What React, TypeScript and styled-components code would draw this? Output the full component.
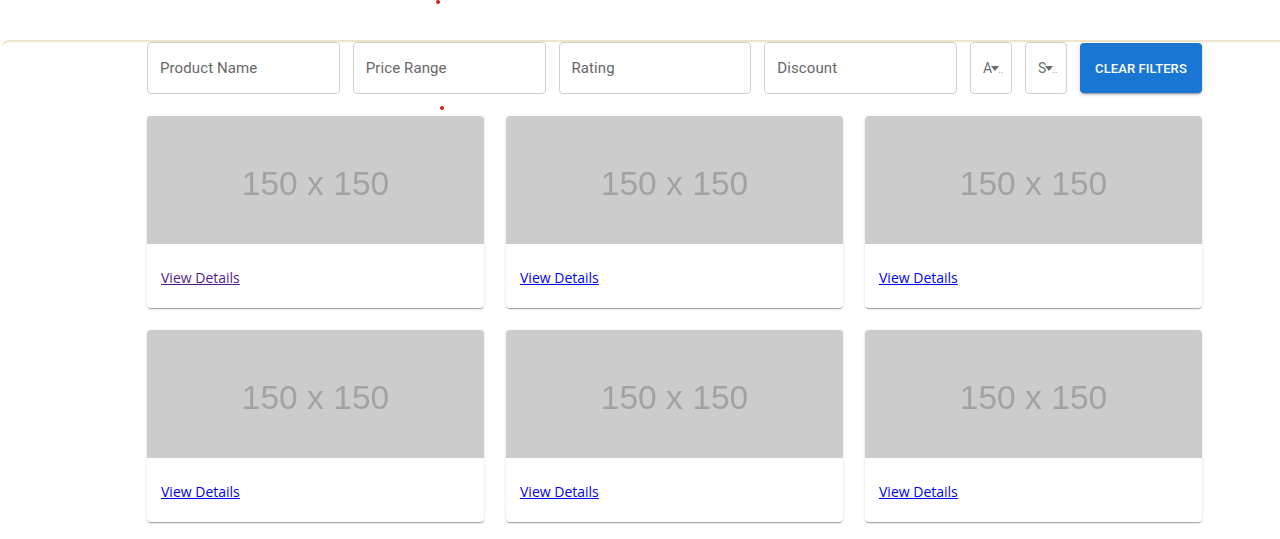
import React from "react";
import styled, { createGlobalStyle } from "styled-components";

const Global = createGlobalStyle`
  html, body { margin: 0; padding: 0; background: #fff; }
  body { font-family: Roboto, "Liberation Sans", sans-serif; }
`;

const Page = styled.div`
  position: relative;
  width: 1280px;
  height: 539px;
  overflow: hidden;
  background: #fff;
`;

const TopSpace = styled.div`
  height: 40px;
`;

const Panel = styled.div`
  border-top: 2px solid #efe3c9;
  border-left: 1px solid transparent;
  border-top-left-radius: 10px;
  padding-left: 146px;
  padding-right: 78px;
`;

const FilterRow = styled.div`
  display: flex;
  align-items: center;
  gap: 13px;
  height: 52px;
`;

const Field = styled.div<{ $w?: number }>`
  box-sizing: border-box;
  height: 52px;
  ${(p) => (p.$w ? `width: ${p.$w}px; flex: none;` : `flex: 1;`)}
  border: 1px solid #cfcfcf;
  border-radius: 4px;
  display: flex;
  align-items: center;
  padding-left: 12px;
  font-size: 15px;
  color: #676767;
  letter-spacing: 0.1px;
`;

const SelectText = styled.span`
  display: flex;
  align-items: center;
  font-size: 14px;
  color: #707070;
`;

const Dots = styled.span`
  font-size: 9px;
  margin-left: -1px;
  margin-top: 4px;
`;

const ClearButton = styled.button`
  box-sizing: border-box;
  flex: none;
  width: 122px;
  height: 50px;
  border: none;
  border-radius: 4px;
  background: #1976d2;
  color: #fff;
  font-family: Roboto, "Liberation Sans", sans-serif;
  font-weight: 500;
  font-size: 13px;
  letter-spacing: 0.1px;
  text-transform: uppercase;
  box-shadow: 0px 3px 1px -2px rgba(0,0,0,0.2), 0px 2px 2px 0px rgba(0,0,0,0.14), 0px 1px 5px 0px rgba(0,0,0,0.12);
`;

const Grid = styled.div`
  display: grid;
  grid-template-columns: repeat(3, 337px);
  column-gap: 22px;
  row-gap: 22px;
  margin-top: 22px;
`;

const Card = styled.div`
  height: 192px;
  border-radius: 4px;
  overflow: hidden;
  background: #fff;
  box-shadow: 0px 2px 1px -1px rgba(0,0,0,0.2), 0px 1px 1px 0px rgba(0,0,0,0.14), 0px 1px 3px 0px rgba(0,0,0,0.12);
  display: flex;
  flex-direction: column;
`;

const Placeholder = styled.div`
  box-sizing: border-box;
  height: 128px;
  padding-top: 7px;
  background: #cccccc;
  display: flex;
  align-items: center;
  justify-content: center;
  font-family: "Liberation Sans", Arial, sans-serif;
  font-size: 33.6px;
  color: #a2a2a2;
  filter: blur(0.4px);
`;

const CardBody = styled.div`
  flex: 1;
  display: flex;
  align-items: center;
  padding-left: 14px;
  padding-top: 3px;
`;

const DetailsLink = styled.a<{ $visited?: boolean }>`
  font-family: "Open Sans", "Noto Sans", sans-serif;
  font-size: 14px;
  color: ${(p) => (p.$visited ? "#551a8b" : "#0000ee")};
  text-decoration: underline;
`;

const RedDot = styled.span<{ $x: number; $y: number }>`
  position: absolute;
  left: ${(p) => p.$x}px;
  top: ${(p) => p.$y}px;
  width: 4px;
  height: 4px;
  border-radius: 50%;
  background: #d01c1c;
`;

const Arrow = () => (
  <svg width="8" height="6" viewBox="0 0 8 6" style={{ marginLeft: -1, marginTop: 2 }}>
    <path d="M0 0 H8 L4 5 Z" fill="#6a6a6a" />
  </svg>
);

const fields = ["Product Name", "Price Range", "Rating", "Discount"];

export default function App() {
  return (
    <Page>
      <Global />
      <TopSpace />
      <Panel>
        <FilterRow>
          {fields.map((f) => (
            <Field key={f}>{f}</Field>
          ))}
          <Field $w={42}>
            <SelectText>
              A<Arrow />
              <Dots>..</Dots>
            </SelectText>
          </Field>
          <Field $w={42}>
            <SelectText>
              S<Arrow />
              <Dots>..</Dots>
            </SelectText>
          </Field>
          <ClearButton>Clear Filters</ClearButton>
        </FilterRow>
        <Grid>
          {Array.from({ length: 6 }).map((_, i) => (
            <Card key={i}>
              <Placeholder>150 x 150</Placeholder>
              <CardBody>
                <DetailsLink href="#" $visited={i === 0}>
                  View Details
                </DetailsLink>
              </CardBody>
            </Card>
          ))}
        </Grid>
      </Panel>
      <RedDot $x={436} $y={0} />
      <RedDot $x={440} $y={106} />
    </Page>
  );
}
